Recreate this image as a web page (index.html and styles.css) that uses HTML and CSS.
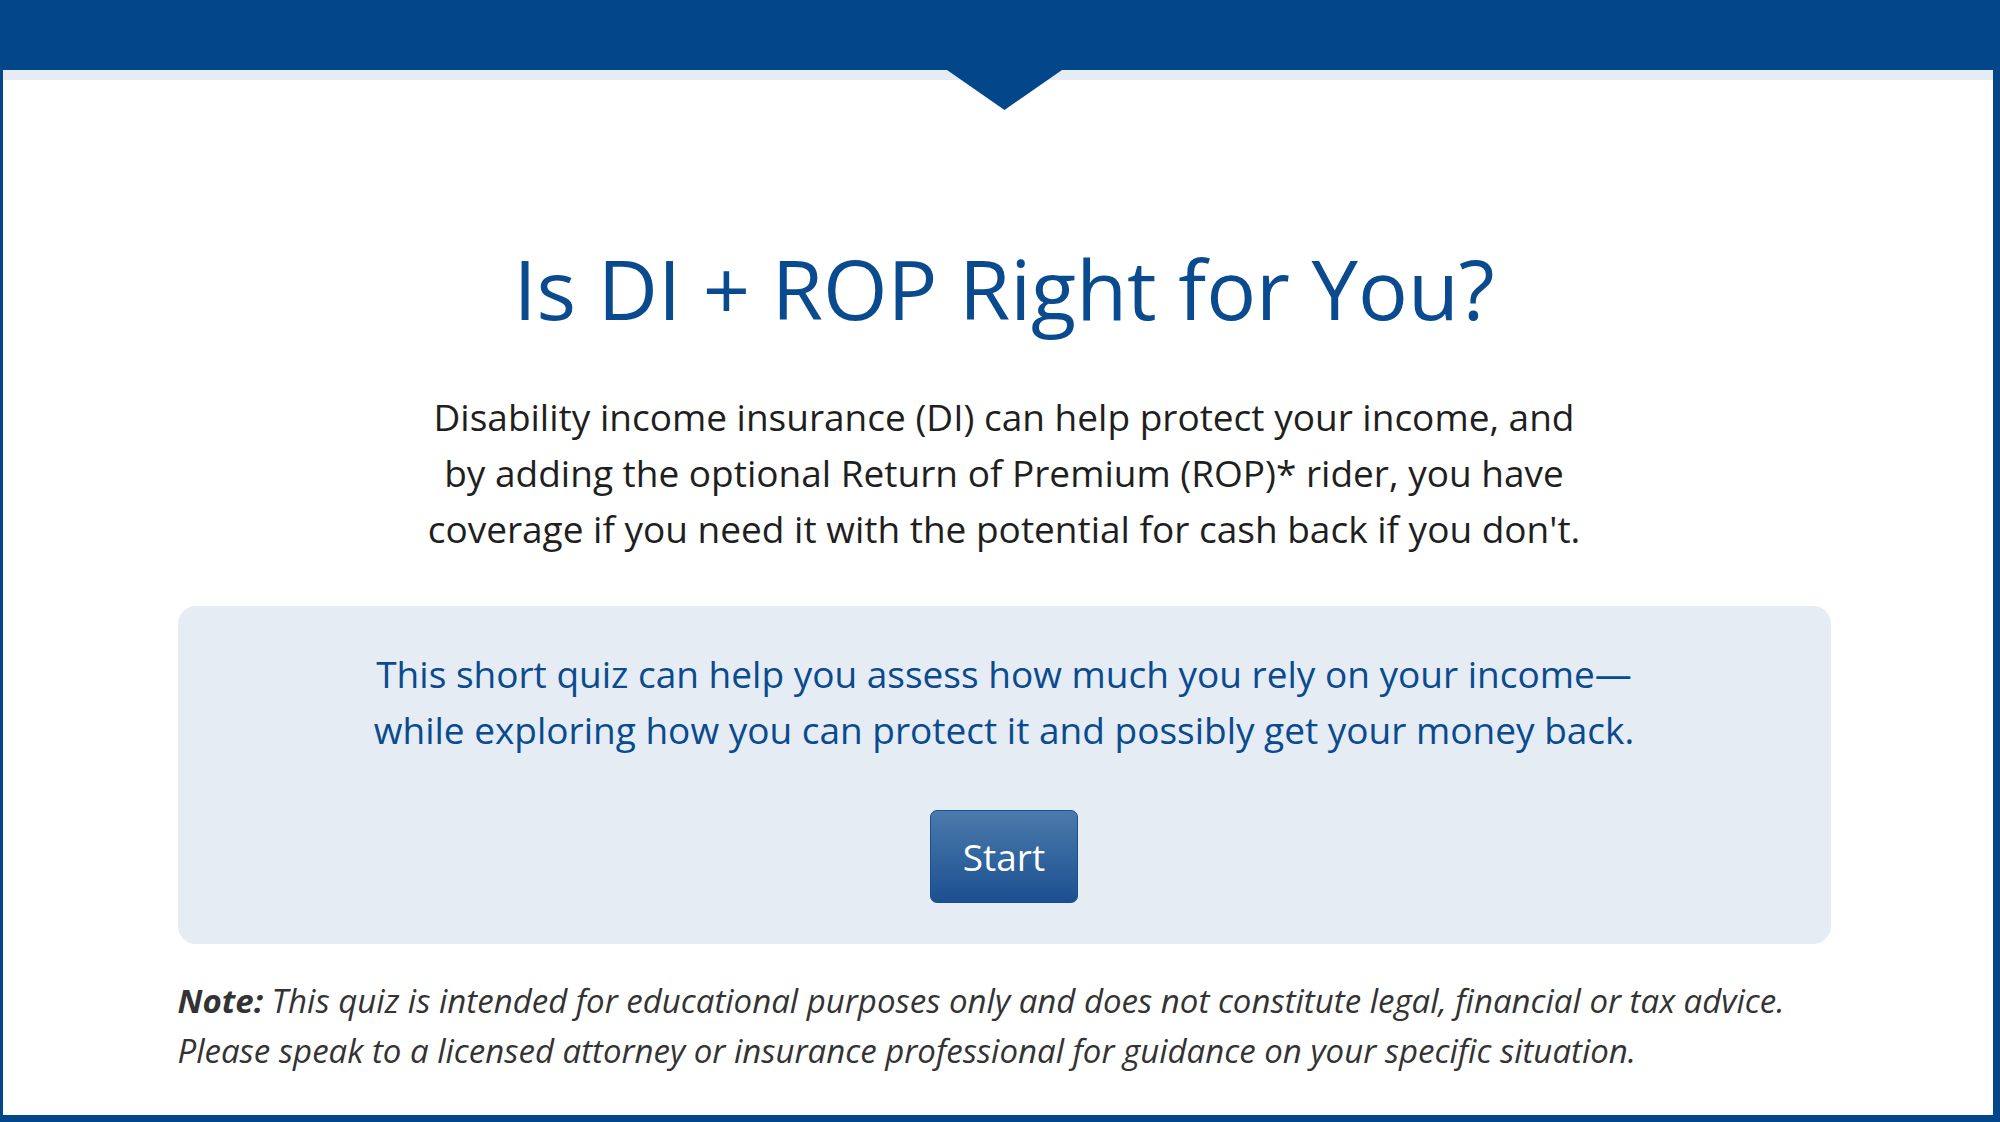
FILE: index.html
```html
<!DOCTYPE html>
<html lang="en">
<head>
<meta charset="UTF-8">
<meta name="viewport" content="width=device-width, initial-scale=1.0">
<title>Is DI + ROP Right for You?</title>
<link rel="stylesheet" href="styles.css">
</head>
<body>
<div class="top-bar"></div>
<div class="frame">
    <div class="strip"></div>
    <div class="content">
        <h1 class="title">Is DI + ROP Right for You?</h1>
        <p class="intro">
            Disability income insurance (DI) can help protect your income, and<br>
            by adding the optional Return of Premium (ROP)* rider, you have<br>
            coverage if you need it with the potential for cash back if you don't.
        </p>
        <div class="quiz-box">
            <p class="quiz-text">
                This short quiz can help you assess how much you rely on your income—<br>
                while exploring how you can protect it and possibly get your money back.
            </p>
            <button class="start-button" type="button">Start</button>
        </div>
        <p class="note">
            <strong>Note:</strong> This quiz is intended for educational purposes only and does not constitute legal, financial or tax advice.<br>
            Please speak to a licensed attorney or insurance professional for guidance on your specific situation.
        </p>
    </div>
</div>
</body>
</html>
```

FILE: styles.css
```css
body {
    font-family: "Open Sans", "Noto Sans", Arial, sans-serif;
    margin: 0;
    padding: 0;
    background-color: #fff;
    color: #222;
}

.top-bar {
    position: relative;
    height: 70px;
    background-color: #03478a;
}

/* little arrow hanging from the bar */
.top-bar::after {
    content: "";
    position: absolute;
    left: 947px;
    top: 70px;
    width: 115px;
    height: 40px;
    background-color: #03478a;
    clip-path: polygon(0 0, 100% 0, 50% 100%);
    z-index: 2;
}

.frame {
    border-left: 3px solid #03478a;
    border-right: 7px solid #03478a;
    border-bottom: 7px solid #03478a;
    height: 1052px;
    box-sizing: border-box;
}

.strip {
    height: 10px;
    background-color: #e5ecf4;
}

.content {
    width: 1653px;
    margin: 0 auto;
    padding-left: 12px;
    text-align: center;
}

.title {
    margin: 153px 0 0;
    font-size: 83px;
    font-weight: 400;
    line-height: 110px;
    color: #0a4a8e;
}

.intro {
    margin: 46px 0 0;
    font-size: 37px;
    line-height: 56px;
    color: #1f1f1f;
}

.quiz-box {
    margin-top: 49px;
    padding: 40px 20px 41px;
    background-color: #e5ecf4;
    border-radius: 18px;
}

.quiz-text {
    margin: 0;
    font-size: 37px;
    line-height: 56px;
    color: #0a4a8e;
}

.start-button {
    margin-top: 52px;
    width: 148px;
    height: 93px;
    padding: 0;
    font-family: inherit;
    font-size: 37px;
    color: #fff;
    background: linear-gradient(#4b7bac, #1b4f90);
    border: 1px solid #1b4f90;
    border-radius: 7px;
    cursor: pointer;
}

.note {
    margin: 32px 0 0;
    text-align: left;
    font-size: 33px;
    line-height: 50px;
    font-style: italic;
    color: #333;
}

.note strong {
    font-weight: 700;
}
```
